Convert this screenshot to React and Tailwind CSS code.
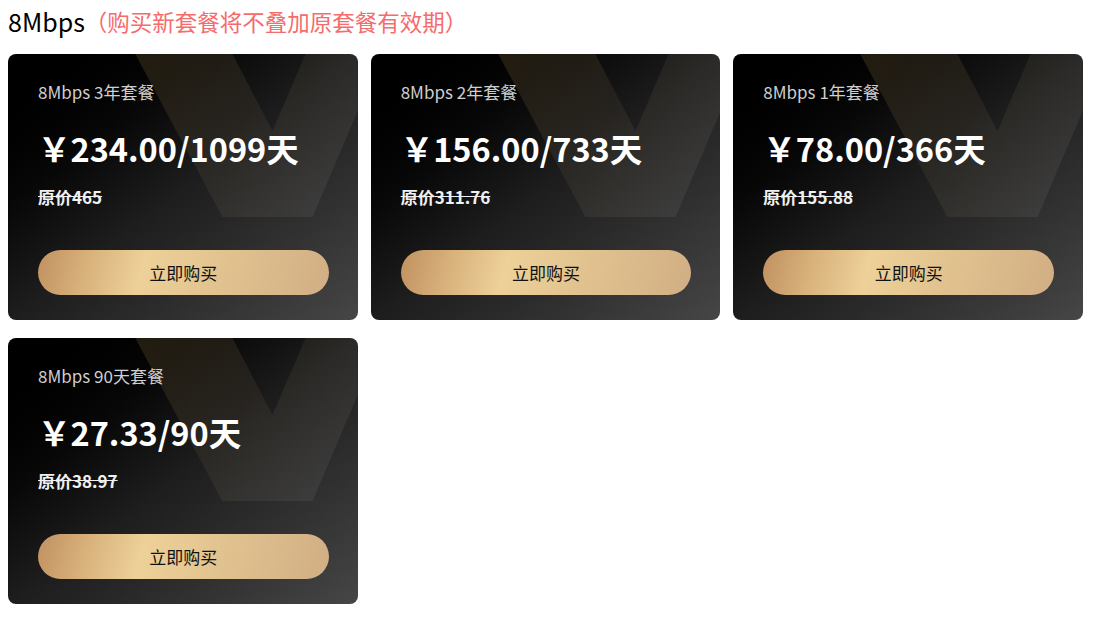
const plans = [
  { name: "8Mbps 3年套餐", price: "234.00", days: 1099, original: "465" },
  { name: "8Mbps 2年套餐", price: "156.00", days: 733, original: "311.76" },
  { name: "8Mbps 1年套餐", price: "78.00", days: 366, original: "155.88" },
  { name: "8Mbps 90天套餐", price: "27.33", days: 90, original: "38.97" },
];

function Decor({ id }) {
  // the faint "V" shape behind the card content
  return (
    <svg
      className="absolute inset-0 pointer-events-none"
      width="100%"
      height="100%"
      viewBox="0 0 349 266"
      preserveAspectRatio="none"
    >
      <defs>
        <linearGradient id={id} gradientUnits="userSpaceOnUse" x1="140" y1="0" x2="330" y2="140">
          <stop offset="0" stopColor="rgb(200,160,90)" stopOpacity="0.16" />
          <stop offset="0.5" stopColor="rgb(200,170,120)" stopOpacity="0.08" />
          <stop offset="1" stopColor="rgb(255,255,255)" stopOpacity="0.06" />
        </linearGradient>
      </defs>
      <polygon
        points="127,0 224,0 264,77 297,0 349,0 349,57 304,163 214,163"
        fill={`url(#${id})`}
      />
    </svg>
  );
}

function PlanCard({ plan, idx }) {
  return (
    <div className="relative h-[266px] rounded-lg overflow-hidden bg-linear-to-br from-black via-[#1d1d1d] to-[#464646]">
      <Decor id={`v-${idx}`} />
      <div className="relative flex flex-col pl-[30px] pr-[29px] pt-[26px]">
        <div className="h-[24px] leading-[24px] text-[17px] text-[#cfcfcf]">{plan.name}</div>
        <div className="mt-[22px] h-[44px] leading-[44px] text-[32.5px] font-bold text-white">
          ￥{plan.price}/{plan.days}天
        </div>
        <div className="mt-[15px] h-[24px] leading-[24px] text-[17px] font-bold text-[#f0f0f0] line-through">
          原价{plan.original}
        </div>
        <button className="mt-[41px] h-[45px] w-full rounded-full bg-[linear-gradient(105deg,#c0915f_0%,#d9b27c_18%,#edd198_36%,#e2c490_60%,#d1ae84_100%)] text-[17px] font-normal text-[#111]">
          立即购买
        </button>
      </div>
    </div>
  );
}

export default function App() {
  return (
    <div
      className="bg-white min-h-screen px-2"
      style={{ fontFamily: '"Noto Sans CJK SC", "Noto Sans", sans-serif' }}
    >
      <div className="h-[44px] flex items-center mb-[10px]">
        <span className="text-[25px] text-black">8Mbps</span>
        <span className="text-[22.5px] text-[#f56c6c]">（购买新套餐将不叠加原套餐有效期）</span>
      </div>
      <div className="grid w-[1075px] grid-cols-3 gap-x-[13px] gap-y-[18px]">
        {plans.map((p, i) => (
          <PlanCard key={p.name} plan={p} idx={i} />
        ))}
      </div>
    </div>
  );
}
